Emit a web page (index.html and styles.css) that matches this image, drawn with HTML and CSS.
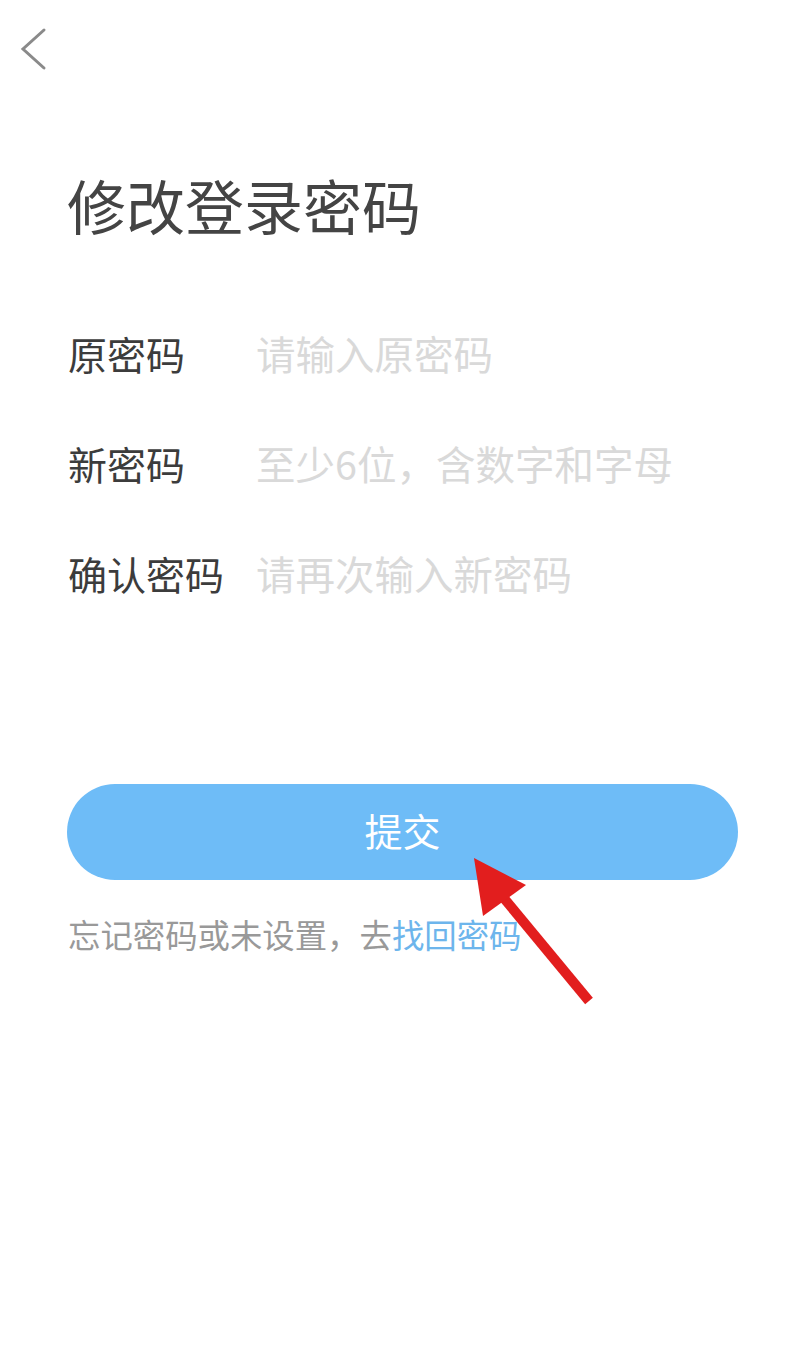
FILE: index.html
```html
<!DOCTYPE html>
<html lang="zh-CN">
<head>
<meta charset="utf-8">
<title>修改登录密码</title>
<link rel="stylesheet" href="styles.css">
</head>
<body>
<div class="page">
  <header class="topbar">
    <svg class="back" width="60" height="100" viewBox="0 0 60 100" aria-hidden="true">
      <polyline points="44,30 23,49 44,68" fill="none" stroke="#8a8a8a" stroke-width="3" stroke-linecap="round" stroke-linejoin="miter"/>
    </svg>
  </header>
  <main class="content">
    <h1 class="title">修改登录密码</h1>
    <form class="form">
      <div class="row"><label class="label">原密码</label><span class="placeholder">请输入原密码</span></div>
      <div class="row"><label class="label">新密码</label><span class="placeholder">至少6位，含数字和字母</span></div>
      <div class="row"><label class="label">确认密码</label><span class="placeholder">请再次输入新密码</span></div>
    </form>
    <div class="submit">提交</div>
    <p class="hint">忘记密码或未设置，去<span class="link">找回密码</span></p>
  </main>
  <svg class="arrow" width="796" height="1371" viewBox="0 0 796 1371" aria-hidden="true">
    <line x1="589" y1="1001" x2="503" y2="897" stroke="#e21e1e" stroke-width="10"/>
    <polygon points="474,858 526,885 483,916" fill="#e21e1e"/>
  </svg>
</div>
</body>
</html>
```
FILE: styles.css
```css
html, body {
  margin: 0;
  padding: 0;
  background: #ffffff;
}
body {
  font-family: "Noto Sans CJK SC", "Noto Sans", sans-serif;
}
.page {
  position: relative;
  width: 796px;
  min-height: 1371px;
}
.topbar {
  height: 100px;
}
.back {
  display: block;
}
.content {
  padding: 0 58px 0 68px;
}
.title {
  margin: 75px 0 0 -1px;
  font-size: 59px;
  line-height: 59px;
  font-weight: 400;
  color: #444444;
}
.form {
  margin-top: 66px;
  display: flex;
  flex-direction: column;
}
.row {
  display: flex;
  align-items: center;
  height: 110px;
  font-size: 39px;
  padding-bottom: 5px;
  box-sizing: border-box;
}
.label {
  width: 188px;
  flex: none;
  color: #3c3c3c;
}
.placeholder {
  color: #d9d9d9;
  font-size: 39.5px;
}
.submit {
  margin-top: 154px;
  height: 96px;
  border-radius: 48px;
  background: #6ebcf7;
  color: #ffffff;
  font-size: 38px;
  display: flex;
  align-items: center;
  justify-content: center;
  margin-left: -1px;
  padding-bottom: 5px;
  box-sizing: border-box;
}
.hint {
  margin: 34px 0 0 0;
  font-size: 32.4px;
  line-height: 40px;
  color: #999999;
}
.link {
  color: #6db5ec;
}
.arrow {
  position: absolute;
  left: 0;
  top: 0;
  pointer-events: none;
}
```
